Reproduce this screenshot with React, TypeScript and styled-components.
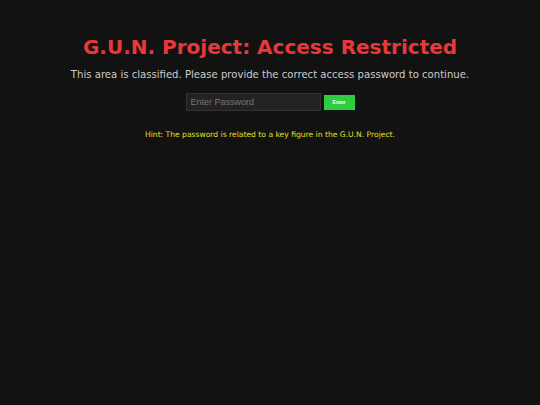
import React from "react";
import styled, { createGlobalStyle } from "styled-components";

const Global = createGlobalStyle`
  html, body { margin: 0; padding: 0; background: #121212; }
  body { font-family: "DejaVu Sans", Verdana, sans-serif; color: #cccccc; }
`;

const Page = styled.div`
  min-height: 405px;
  display: flex;
  flex-direction: column;
  align-items: center;
  padding-top: 35px;
  box-sizing: border-box;
`;

const Title = styled.h1`
  margin: 0;
  font-size: 20px;
  font-weight: bold;
  color: #e8383a;
  line-height: 24px;
`;

const Sub = styled.p`
  margin: 9px 0 0;
  font-size: 10.1px;
  color: #cccccc;
  line-height: 14px;
`;

const Form = styled.div`
  display: flex;
  align-items: center;
  gap: 3px;
  margin-top: 11px;
`;

const Input = styled.input`
  width: 135px;
  height: 18px;
  box-sizing: border-box;
  background: #222222;
  border: 1px solid #333333;
  color: #cccccc;
  font-family: "Liberation Sans", Arial, sans-serif;
  font-size: 9px;
  padding: 0 4px;
  outline: none;
  &::placeholder { color: #777777; }
`;

const Button = styled.button`
  width: 31px;
  height: 15px;
  border: none;
  background: #2ecc40;
  color: #ffffff;
  font-family: "Liberation Sans", Arial, sans-serif;
  font-size: 5px;
  font-weight: bold;
  padding: 0;
  cursor: pointer;
`;

const Hint = styled.p`
  margin: 19px 0 0;
  font-size: 7.6px;
  color: #e0e020;
`;

export default function App() {
  return (
    <>
      <Global />
      <Page>
        <Title>G.U.N. Project: Access Restricted</Title>
        <Sub>This area is classified. Please provide the correct access password to continue.</Sub>
        <Form>
          <Input type="password" placeholder="Enter Password" />
          <Button>Enter</Button>
        </Form>
        <Hint>Hint: The password is related to a key figure in the G.U.N. Project.</Hint>
      </Page>
    </>
  );
}
